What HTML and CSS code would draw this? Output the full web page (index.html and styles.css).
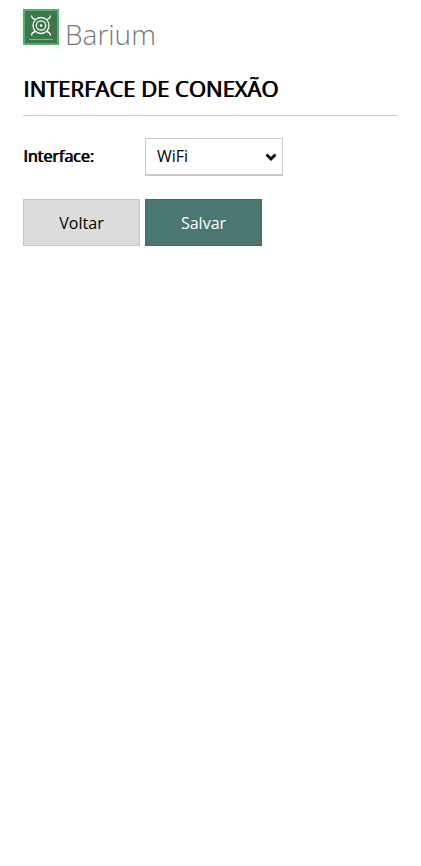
FILE: index.html
```html
<!DOCTYPE html>
<html lang="pt-BR">
<head>
<meta charset="UTF-8">
<meta name="viewport" content="width=device-width, initial-scale=1">
<title>Barium - Interface de Conexão</title>
<link rel="stylesheet" href="styles.css">
</head>
<body>
<div class="container">
    <header class="logo">
        <svg class="logo-icon" viewBox="0 0 36 36" aria-hidden="true">
            <rect width="36" height="36" fill="#52b265"/>
            <rect x="2" y="2" width="32" height="32" fill="#3e774b"/>
            <g fill="none" stroke="#fff" stroke-width="1.3">
                <circle cx="18" cy="16.500" r="8"/>
                <circle cx="18" cy="16.500" r="4.700"/>
                <path d="M8.500 6.500q.5 3.500 4 4M27.500 6.500q-.5 3.500-4 4M8.500 26.500q.5-3.500 4-4M27.500 26.500q-.5-3.500-4-4"/>
            </g>
            <circle cx="18" cy="16.500" r="1.200" fill="#fff"/>
            <path d="M6 30.500h24" stroke="#86ae8d"/>
        </svg>
        <span class="logo-name">Barium</span>
    </header>
    <h1>INTERFACE DE CONEXÃO</h1>
    <form>
        <div class="row">
            <label for="interface">Interface:</label>
            <div class="select">
                <select id="interface">
                    <option selected>WiFi</option>
                    <option>Ethernet</option>
                </select>
                <svg class="arrow" viewBox="0 0 12 8" aria-hidden="true">
                    <path d="M1.500 1.500L6 6l4.500-4.500" fill="none" stroke="#000" stroke-width="2.800"/>
                </svg>
            </div>
        </div>
        <div class="buttons">
            <button type="button" class="back">Voltar</button>
            <button type="submit" class="save">Salvar</button>
        </div>
    </form>
</div>
</body>
</html>
```
FILE: styles.css
```css
* {
    box-sizing: border-box;
}
body {
    margin: 0;
    background-color: #fff;
    color: #000;
    font-family: "Open Sans", sans-serif;
    font-size: 16px;
}
.container {
    padding: 9px 23px;
}
.logo {
    display: flex;
    align-items: flex-start;
    gap: 6px;
    height: 36px;
}
.logo-icon {
    width: 36px;
    height: 36px;
}
.logo-name {
    padding-top: 7px;
    color: #777;
    font-size: 28px;
    font-weight: 300;
    line-height: 36px;
}
h1 {
    margin: 27px 0 22px;
    padding-bottom: 11px;
    border-bottom: 1px solid #ccc;
    font-size: 22px;
    font-weight: 400;
    line-height: 32px;
    text-shadow: 1px 0 #000;
}
.row {
    display: flex;
    margin-bottom: 23px;
}
label {
    width: 122px;
    line-height: 36px;
    text-shadow: 1px 0 #000;
}
.select {
    position: relative;
    width: 138px;
}
select {
    width: 100%;
    height: 38px;
    padding: 0 30px 2px 11px;
    border: 1px solid #c8c8c8;
    border-bottom-width: 2px;
    border-radius: 0;
    background-color: #fff;
    color: #000;
    font: inherit;
    appearance: none;
}
.arrow {
    position: absolute;
    top: 15px;
    right: 6px;
    width: 12px;
    height: 8px;
    pointer-events: none;
}
.buttons {
    display: flex;
    gap: 5px;
}
button {
    width: 117px;
    height: 47px;
    padding: 0;
    border: 1px solid #c8c8c8;
    background-color: #dcdcdc;
    color: #000;
    font: inherit;
    cursor: pointer;
}
.save {
    border-color: #426a65;
    background-color: #4a7772;
    color: #fff;
}
```
